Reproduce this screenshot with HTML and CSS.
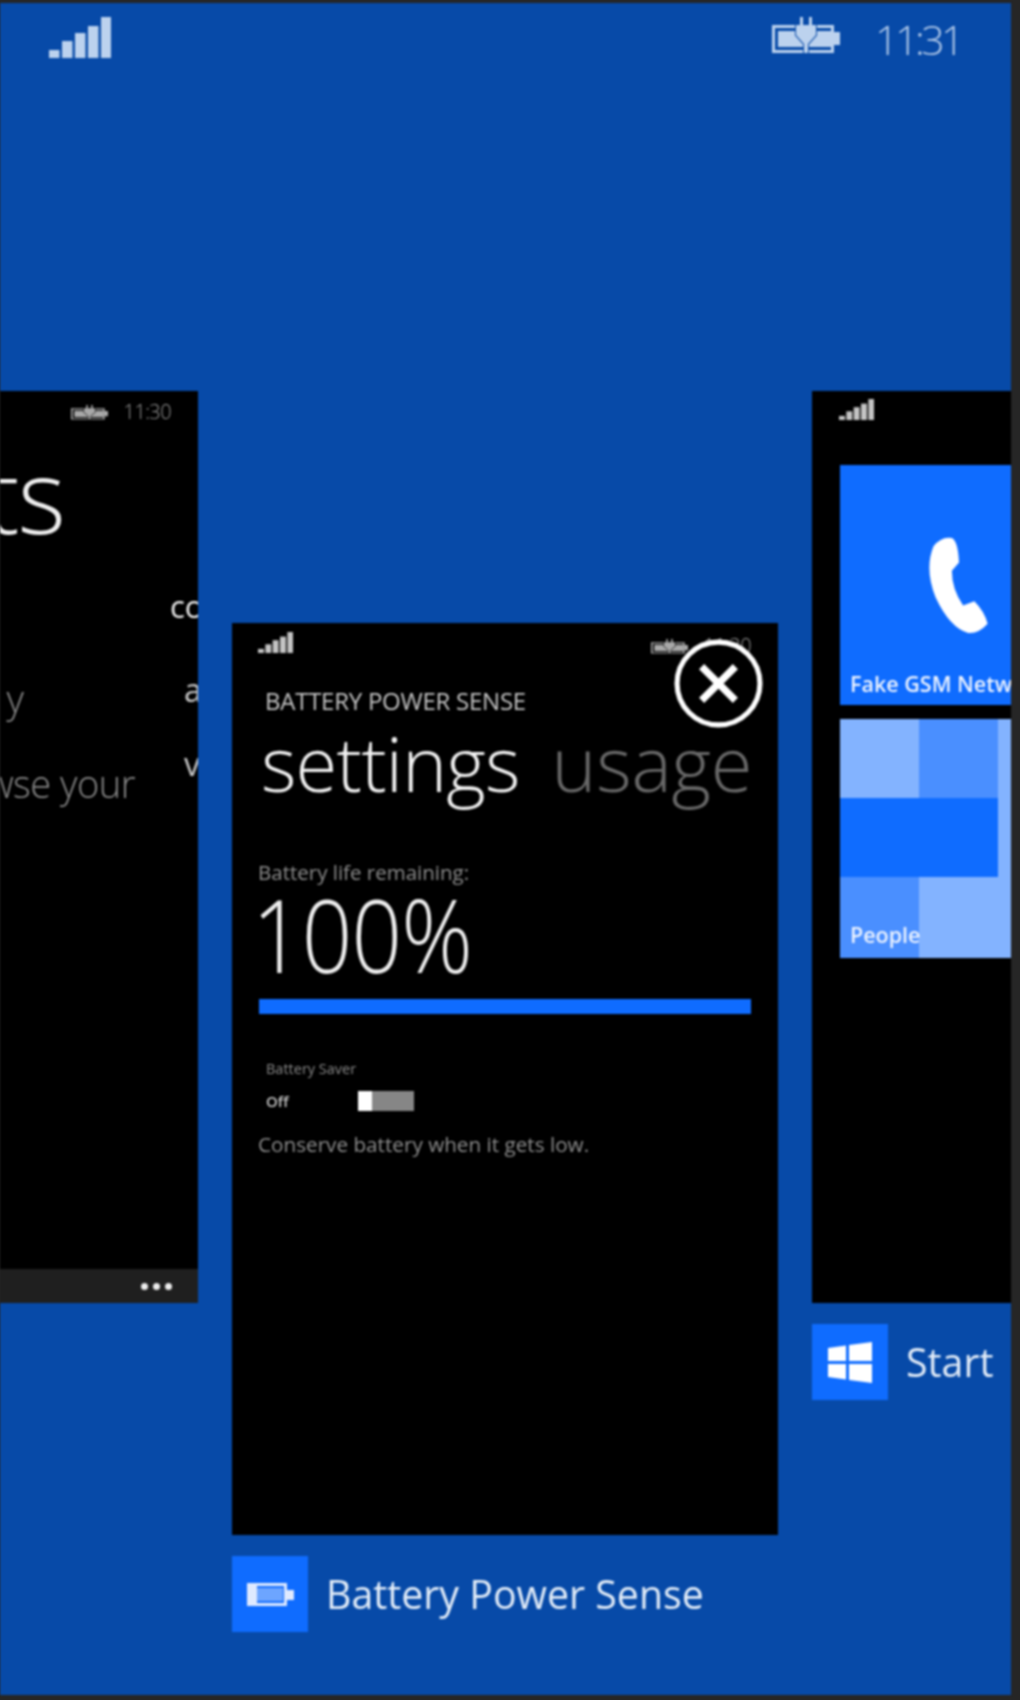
FILE: index.html
```html
<!DOCTYPE html>
<html lang="en">
<head>
<meta charset="utf-8">
<title>Battery Power Sense</title>
<link rel="stylesheet" href="styles.css">
</head>
<body>
<svg class="defs" width="0" height="0" aria-hidden="true">
  <symbol id="signal" viewBox="0 0 62 41" preserveAspectRatio="none">
    <rect x="0" y="33" width="10.500" height="8"/><rect x="13" y="24" width="10.500" height="17"/><rect x="26" y="16" width="10.500" height="25"/><rect x="39" y="9" width="10.500" height="32"/><rect x="52" y="0" width="10" height="41"/>
  </symbol>
  <symbol id="plug" viewBox="0 0 68 37" preserveAspectRatio="none">
    <path fill-rule="evenodd" d="M0 8H62V15H68V28H62V36H0ZM3 11V33H59V11Z"/>
    <path d="M6 14H59V30H6Z"/>
    <path class="plug-head" d="M28 0H31V8H37V0H40V8H44V18L36 27V36H32V27L24 18V8H28Z"/>
  </symbol>
</svg>
<main class="frame">
  <header class="status">
    <svg class="signal-lg"><use href="#signal"/></svg>
    <div class="status-right">
      <svg class="plug-lg"><use href="#plug"/></svg>
      <span class="time-lg">11:31</span>
    </div>
  </header>

  <section class="cards">
    <div class="column col-left">
      <article class="card card-left">
        <div class="left-status">
          <svg class="plug-sm"><use href="#plug"/></svg>
          <span class="time-sm">11:30</span>
        </div>
        <div class="left-title">ts</div>
        <div class="left-body">
          <div class="left-a">
            <div class="line-y">y</div>
            <div class="line-your">wse your</div>
          </div>
          <div class="left-b">
            <div class="line-co">co</div>
            <div class="line-a">a</div>
            <div class="line-v">v</div>
          </div>
        </div>
        <div class="appbar"><i class="dot"></i><i class="dot"></i><i class="dot"></i></div>
      </article>
    </div>

    <div class="column col-center">
      <article class="card card-center">
        <div class="center-status">
          <svg class="signal-sm"><use href="#signal"/></svg>
          <div class="center-status-right">
            <svg class="plug-sm"><use href="#plug"/></svg>
            <span class="time-sm">11:30</span>
          </div>
        </div>
        <div class="app-name">BATTERY POWER SENSE</div>
        <div class="pivot"><span class="pivot-on">settings</span><span class="pivot-off">usage</span></div>
        <div class="life-label">Battery life remaining:</div>
        <div class="life-value">100%</div>
        <div class="bar"></div>
        <div class="saver-label">Battery Saver</div>
        <div class="saver-row">
          <span class="saver-off">Off</span>
          <span class="toggle"><i class="toggle-thumb"></i></span>
        </div>
        <div class="saver-note">Conserve battery when it gets low.</div>
        <div class="close">
          <svg viewBox="0 0 87 87" class="close-icon"><circle cx="43.5" cy="43.5" r="40.5"/><path d="M27 27L60 60M60 27L27 60"/></svg>
        </div>
      </article>
      <div class="caption">
        <div class="cap-tile">
          <svg class="cap-battery" viewBox="0 0 47 24"><path fill-rule="evenodd" d="M0 1H40V8H47V18H40V24H0ZM3 4V21H37V4Z"/><rect x="3" y="4" width="7" height="17"/><rect x="10" y="6" width="26" height="13" opacity=".45"/></svg>
        </div>
        <span class="cap-text">Battery Power Sense</span>
      </div>
    </div>

    <div class="column col-right">
      <article class="card card-right">
        <svg class="signal-sm signal-right"><use href="#signal"/></svg>
        <div class="tile tile-phone">
          <svg class="phone" viewBox="0 0 60 96"><path d="M6 10Q14 0 24 2Q30 5 31 26L24 34Q24 52 35 68L46 64Q56 74 59 86Q50 96 40 95Q22 90 8 60Q-3 32 6 10Z"/></svg>
          <span class="tile-label">Fake GSM Netw</span>
        </div>
        <div class="tile tile-people">
          <i class="p-l"></i><i class="p-m"></i><i class="p-l"></i>
          <i class="p-b"></i><i class="p-b"></i><i class="p-l"></i>
          <i class="p-m"></i><i class="p-l"></i><i class="p-l"></i>
          <span class="tile-label people-label">People</span>
        </div>
      </article>
      <div class="caption">
        <div class="cap-tile">
          <svg class="cap-win" viewBox="0 0 44 41"><path d="M0 6L18 3.500V19H0ZM21 3L44 0V19H21ZM0 22H18V37.500L0 35ZM21 22H44V41L21 38Z"/></svg>
        </div>
        <span class="cap-text">Start</span>
      </div>
    </div>
  </section>
</main>
</body>
</html>
```

FILE: styles.css
```css
* { box-sizing: border-box; }
html, body { margin: 0; padding: 0; background: #262626; }
body { width: 1020px; height: 1700px; overflow: hidden; font-family: "Open Sans", "Liberation Sans", sans-serif; }
.defs { position: absolute; }
i { display: block; }

.frame {
  --halo: #000;
  width: 1011px;
  height: 1692px;
  margin-top: 3px;
  background: #074aa8;
  overflow: hidden;
  filter: blur(.8px);
}
.plug-head { stroke: var(--halo); stroke-width: 2px; paint-order: stroke; }

.status {
  --halo: #074aa8;
  height: 388px;
  padding: 14px 50px 0 49px;
  display: flex;
  justify-content: space-between;
  align-items: flex-start;
}
.signal-lg { width: 62px; height: 41px; fill: #bcd2ee; }
.status-right { display: flex; align-items: flex-start; gap: 35px; }
.plug-lg { width: 68px; height: 37px; fill: #bcd2ee; }
.time-lg { font-size: 41px; font-weight: 300; line-height: 44px; color: #b4cbea; letter-spacing: -3.500px; }

.cards { display: flex; gap: 34px; align-items: flex-start; }
.card { background: #000; height: 912px; position: relative; overflow: hidden; }
.col-left { width: 198px; flex: none; }
.col-center { width: 546px; flex: none; margin-top: 232px; }
.col-right { flex: 1; min-width: 0; }

.plug-sm { width: 37px; height: 15px; fill: #a8a8a8; }
.time-sm { font-size: 20px; line-height: 20px; font-weight: 300; color: #9a9a9a; letter-spacing: -.6px; }
.signal-sm { width: 35px; height: 21px; fill: #c4c4c4; display: block; }

/* left card */
.card-left { display: flex; flex-direction: column; }
.left-status { display: flex; justify-content: flex-end; align-items: center; gap: 16px; padding: 11px 27px 0 0; }
.left-title { width: 64px; display: flex; justify-content: flex-end; white-space: nowrap; font-size: 104px; line-height: 104px; font-weight: 300; color: #eee; margin-top: 20px; letter-spacing: -2px; }
.left-body { display: flex; flex: 1; }
.left-a { width: 170px; flex: none; padding-top: 129px; }
.line-y, .line-your { display: flex; justify-content: flex-end; white-space: nowrap; font-size: 38px; line-height: 46px; color: #8a8a8a; font-weight: 300; }
.line-y { width: 24px; }
.line-your { width: 135px; margin-top: 39px; letter-spacing: -.5px; }
.left-b { flex: 1; padding-top: 40px; white-space: nowrap; }
.line-co { font-size: 31px; line-height: 40px; font-weight: 500; color: #f0f0f0; }
.line-a { margin-top: 44px; margin-left: 14px; font-size: 32px; line-height: 40px; color: #c8c8c8; }
.line-v { margin-top: 34px; margin-left: 14px; font-size: 32px; line-height: 40px; color: #c8c8c8; }
.appbar { height: 34px; flex: none; background: #1f1f1f; display: flex; justify-content: flex-end; align-items: center; gap: 5px; padding-right: 26px; }
.dot { width: 7px; height: 7px; border-radius: 50%; background: #eee; }

/* center card */
.card-center { padding-left: 26px; padding-right: 27px; }
.center-status { display: flex; justify-content: space-between; padding-top: 9px; height: 41px; }
.center-status-right { display: flex; align-items: center; gap: 16px; height: 20px; margin-top: 4px; }
.app-name { margin: 22px 0 0 7px; font-size: 24px; line-height: 30px; color: #c6c6c6; letter-spacing: -.25px; white-space: nowrap; }
.pivot { display: flex; gap: 32px; margin: 2px 0 0 3px; font-size: 76px; line-height: 90px; font-weight: 300; white-space: nowrap; letter-spacing: -.8px; }
.pivot-on { color: #f2f2f2; }
.pivot-off { color: #686868; letter-spacing: -.2px; }
.life-label { margin-top: 50px; font-size: 20.500px; line-height: 28px; color: #8e8e8e; white-space: nowrap; }
.life-value { margin: -2px 0 0 -6px; font-size: 102px; line-height: 100px; font-weight: 300; color: #eee; white-space: nowrap; letter-spacing: -1px; transform: scaleX(.87); transform-origin: left center; }
.bar { height: 15px; background: #0f6cff; margin-top: 15px; margin-left: 1px; }
.saver-label { margin: 45px 0 0 8px; font-size: 14.500px; line-height: 20px; color: #8a8a8a; white-space: nowrap; }
.saver-row { display: flex; align-items: center; margin: 10px 0 0 8px; height: 24px; }
.saver-off { width: 92px; font-size: 15px; font-weight: 600; color: #c8c8c8; line-height: 24px; }
.toggle { display: block; width: 56px; height: 20px; background: #868686; }
.toggle-thumb { width: 14px; height: 20px; background: #fff; }
.saver-note { margin-top: 17px; font-size: 20.700px; line-height: 28px; color: #8e8e8e; white-space: nowrap; }
.close { position: absolute; top: 16px; right: 15px; width: 89px; height: 89px; }
.close-icon { display: block; width: 89px; height: 89px; }
.close-icon circle { fill: #000; stroke: #fff; stroke-width: 5px; }
.close-icon path { fill: none; stroke: #fff; stroke-width: 7px; }

/* right card */
.signal-right { margin: 8px 0 0 -1px; }
.card-right { padding-left: 28px; }
.tile { position: relative; overflow: hidden; }
.tile-phone { height: 240px; margin-top: 45px; background: #0f6cff; }
.phone { position: absolute; left: 87px; top: 71px; width: 62px; height: 98px; fill: #fff; }
.tile-label { position: absolute; left: 10px; bottom: 7px; font-size: 21.500px; line-height: 28px; font-weight: 600; color: #eef4ff; white-space: nowrap; }
.tile-people { height: 239px; margin-top: 14px; display: grid; grid-template-columns: 79px 79px 1fr; grid-template-rows: 79px 79px 1fr; }
.people-label { bottom: 9px; }
.p-l { background: #83b3ff; }
.p-m { background: #4a8fff; }
.p-b { background: #0f6cff; }

/* captions */
.caption { display: flex; align-items: center; gap: 18px; margin-top: 21px; height: 76px; white-space: nowrap; }
.cap-tile { width: 76px; height: 76px; flex: none; background: #0f6cff; display: flex; align-items: center; justify-content: center; }
.cap-battery { width: 47px; height: 24px; fill: #dfeaff; }
.cap-win { width: 44px; height: 41px; fill: #fff; }
.cap-text { font-size: 39.300px; line-height: 50px; color: #e2ecf8; }
```
